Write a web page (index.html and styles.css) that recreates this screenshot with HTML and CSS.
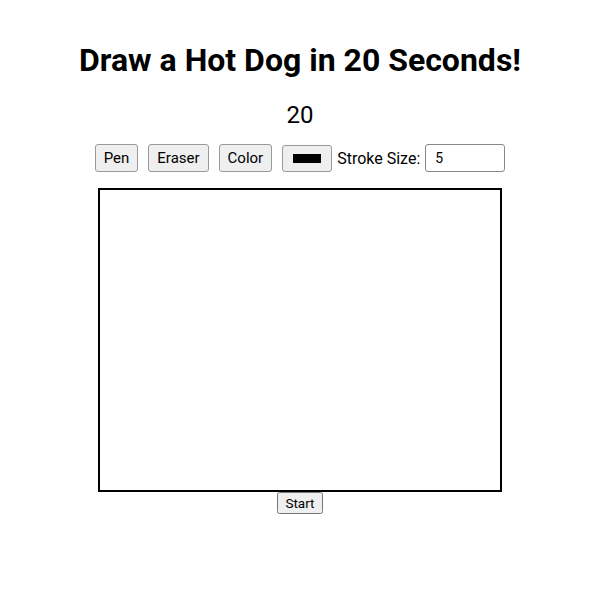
FILE: index.html
```html
<!DOCTYPE html>
<html lang="en">
<head>
    <meta charset="UTF-8">
    <meta name="viewport" content="width=device-width, initial-scale=1.0">
    <title>Hot Dog Drawing Challenge</title>
    <link rel="stylesheet" href="styles.css">
</head>
<body>

<div class="container">
    <h1>Draw a Hot Dog in 20 Seconds!</h1>
    <div id="timer" class="timer">20</div>
    <div class="toolbar">
        <button id="penBtn" class="tool-btn">Pen</button>
        <button id="eraserBtn" class="tool-btn">Eraser</button>
        <button id="colorBtn" class="tool-btn">Color</button>
        <input type="color" id="colorPicker" class="color-picker" value="#000000">
        <label for="strokeSize" class="stroke-label">Stroke Size:</label>
        <input type="number" id="strokeSize" class="stroke-input" value="5" min="1" max="50">
    </div>
    <canvas id="drawCanvas" width="400" height="300"></canvas>
    <button id="startBtn" class="start-btn">Start</button>
</div>

</body>
</html>
```
FILE: styles.css
```css
body, html {
    margin: 0;
    font-family: Roboto, Arial, sans-serif;
    background-color: #ffffff;
    color: #000000;
}

.container {
    display: flex;
    flex-direction: column;
    align-items: center;
    padding-top: 41px;
}

h1 {
    font-size: 32px;
    font-weight: 700;
    margin: 0 0 22px 0;
    line-height: 38px;
}

.timer {
    font-size: 24px;
    line-height: 28px;
    margin-bottom: 15px;
}

.toolbar {
    display: flex;
    align-items: center;
    margin-bottom: 16px;
}

.tool-btn {
    font-family: Roboto, Arial, sans-serif;
    font-size: 15px;
    height: 28px;
    padding: 0 8px;
    margin-right: 10px;
    background-color: #efefef;
    border: 1px solid #999;
    border-radius: 3px;
    color: #000;
}

.color-picker {
    box-sizing: border-box;
    width: 50px;
    height: 27px;
    padding: 8px 10px;
    margin: 0 5px 0 0;
    background-color: #efefef;
    border: 1px solid #999;
    border-radius: 3px;
}

.color-picker::-webkit-color-swatch-wrapper {
    padding: 0;
}

.color-picker::-webkit-color-swatch {
    border: none;
}

.stroke-label {
    font-size: 16px;
    margin-right: 5px;
}

.stroke-input {
    width: 80px;
    height: 28px;
    box-sizing: border-box;
    padding: 0 9px;
    font-family: Roboto, Arial, sans-serif;
    font-size: 14px;
    border: 1px solid #888;
    border-radius: 3px;
}

#drawCanvas {
    border: 2px solid #000;
    background-color: #fff;
}

.start-btn {
    font-family: Roboto, Arial, sans-serif;
    font-size: 13.5px;
    margin-top: 0;
    padding: 1px 6px;
}
```
